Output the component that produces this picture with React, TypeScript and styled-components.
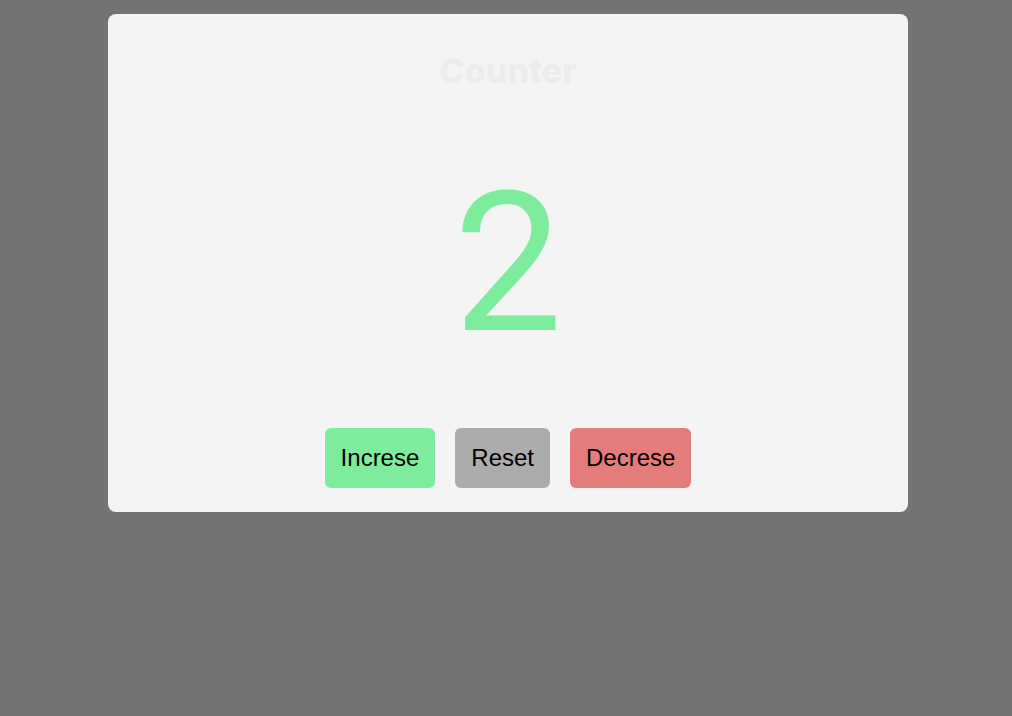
import React, { useState } from "react";
import styled, { createGlobalStyle } from "styled-components";

const Global = createGlobalStyle`
  html, body { margin: 0; padding: 0; background: #737373; }
  body { font-family: "Liberation Sans", Arial, sans-serif; }
`;

const Page = styled.div`
  min-height: 716px;
  display: flex;
  justify-content: center;
  align-items: flex-start;
  padding: 14px 0 0 4px;
  box-sizing: border-box;
`;

const Card = styled.div`
  width: 800px;
  background: #f4f4f4;
  border-radius: 8px;
  display: flex;
  flex-direction: column;
  align-items: center;
  padding: 40px 0 24px;
  box-sizing: border-box;
`;

const Title = styled.h1`
  margin: 0;
  font-family: Inter, "Open Sans", sans-serif;
  font-weight: 800;
  font-size: 34px;
  line-height: 1;
  color: #ececec;
`;

const Count = styled.div`
  margin-top: 79px;
  font-family: Roboto, sans-serif;
  font-weight: 400;
  font-size: 194px;
  line-height: 1;
  color: #7ded9d;
`;

const Buttons = styled.div`
  margin-top: 67px;
  display: flex;
  gap: 20px;
`;

const Button = styled.button<{ $bg: string }>`
  border: none;
  border-radius: 6px;
  background: ${(p) => p.$bg};
  color: #000;
  font-family: "Liberation Sans", Arial, sans-serif;
  font-size: 24px;
  line-height: 1.15;
  padding: 16px;
  cursor: pointer;
`;

export default function App() {
  const [count, setCount] = useState(2);
  return (
    <>
      <Global />
      <Page>
        <Card>
          <Title>Counter</Title>
          <Count>{count}</Count>
          <Buttons>
            <Button $bg="#7ded9d" onClick={() => setCount(count + 1)}>Increse</Button>
            <Button $bg="#adacac" onClick={() => setCount(0)}>Reset</Button>
            <Button $bg="#e57c7c" onClick={() => setCount(count - 1)}>Decrese</Button>
          </Buttons>
        </Card>
      </Page>
    </>
  );
}
